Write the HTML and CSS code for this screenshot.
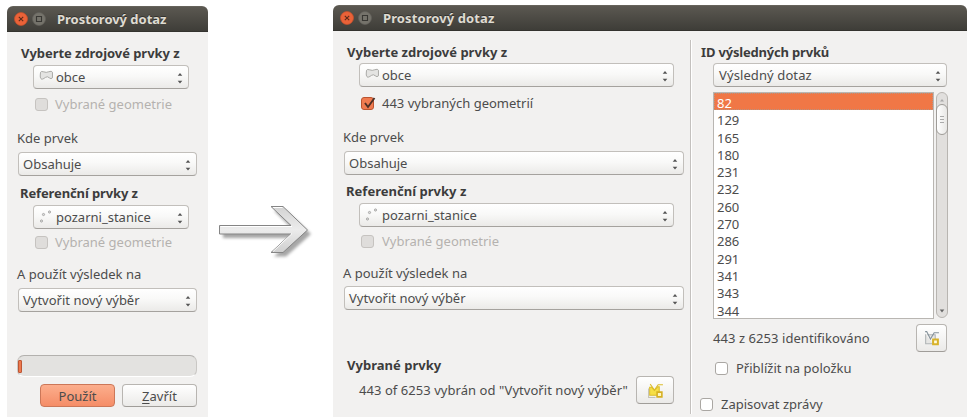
FILE: index.html
```
<!DOCTYPE html>
<html lang="cs">
<head>
<meta charset="utf-8">
<title>Prostorový dotaz</title>
<link rel="stylesheet" href="styles.css">
</head>
<body>
<svg width="0" height="0" class="defs">
  <defs>
    <linearGradient id="metal" x1="0" y1="0" x2="0" y2="1"><stop offset="0" stop-color="#d2d2d2"/><stop offset=".5" stop-color="#ececec"/><stop offset="1" stop-color="#cfcfcf"/></linearGradient>
    <symbol id="spin" viewBox="0 0 6 12"><path d="M.7 3.8 3 1l2.300 2.800zM.7 8.800 3 11.500l2.300-2.700z" fill="#555"/></symbol>
    <symbol id="poly" viewBox="0 0 16 12"><path d="M1.500 2.500Q2 1 5 2q3 1.200 5 0 4-1.500 4.500.5v6Q13 10.500 11 8.500 9 6.500 7 8q-4 3-5 1.500Q.8 8 1.200 5.500z" fill="#e4e4e2" stroke="#a3a3a0"/></symbol>
    <symbol id="dots" viewBox="0 0 16 16"><g fill="#ddd" stroke="#a2a2a0" stroke-width=".9"><circle cx="4.500" cy="5.500" r="1.100"/><circle cx="10.500" cy="3" r="1.100"/><circle cx="2.500" cy="12" r="1.100"/></g></symbol>
    <symbol id="close" viewBox="0 0 14 14"><circle cx="7" cy="7" r="6.500" fill="#ea6238" stroke="#c9502b" stroke-width=".7"/><path d="m4.800 4.800 4.400 4.400m0-4.400L4.800 9.200" stroke="#5c2b1b" stroke-width="1.100"/></symbol>
    <symbol id="max" viewBox="0 0 14 14"><circle cx="7" cy="7" r="6.500" fill="#75736b" stroke="#62605a" stroke-width=".7"/><path d="M4.500 4.500h5v5h-5z" fill="none" stroke="#383733" stroke-width="1.100"/></symbol>
  </defs>
</svg>
<div class="scene">
  <section class="win small">
    <header class="bar"><svg class="wb"><use href="#close"/></svg><svg class="wb"><use href="#max"/></svg><h1>Prostorový dotaz</h1></header>
    <div class="body">
      <h2>Vyberte zdrojové prvky z</h2>
      <div class="combo in"><svg class="poly"><use href="#poly"/></svg><span>obce</span><svg class="spin"><use href="#spin"/></svg></div>
      <label class="check off"><i></i>Vybrané geometrie</label>
      <p class="lbl">Kde prvek</p>
      <div class="combo"><span>Obsahuje</span><svg class="spin"><use href="#spin"/></svg></div>
      <h2 class="ref">Referenční prvky z</h2>
      <div class="combo in"><svg class="dots"><use href="#dots"/></svg><span>pozarni_stanice</span><svg class="spin"><use href="#spin"/></svg></div>
      <label class="check off second"><i></i>Vybrané geometrie</label>
      <p class="lbl res">A použít výsledek na</p>
      <div class="combo"><span>Vytvořit nový výběr</span><svg class="spin"><use href="#spin"/></svg></div>
      <div class="progress"><b></b></div>
      <div class="buttons"><span class="btn primary">Použít</span><span class="btn"><u>Z</u>avřít</span></div>
    </div>
  </section>

  <svg class="arrow" viewBox="0 0 120 80">
    <path d="M10 35.500h70L61 16.500h12L98 40 73 62.500H61L80 44H10z" fill="#777" class="shade"/>
    <path d="M9.500 35.500H81L61 16.500h12L97.500 40 73 62.500H61L81 44H9.500z" fill="url(#metal)" stroke="#858585"/>
    <path d="M10.500 36.500H82M63 17.500h9.500M63 61.500 82 43.500" fill="none" stroke="#fff"/>
  </svg>

  <section class="win large">
    <header class="bar"><svg class="wb"><use href="#close"/></svg><svg class="wb"><use href="#max"/></svg><h1>Prostorový dotaz</h1></header>
    <div class="cols">
      <div class="body">
        <h2>Vyberte zdrojové prvky z</h2>
        <div class="combo in"><svg class="poly"><use href="#poly"/></svg><span>obce</span><svg class="spin"><use href="#spin"/></svg></div>
        <label class="check"><i class="on"><svg viewBox="0 0 15 15"><path d="m4 7 3 4 6.500-9" fill="none" stroke="#4e3026" stroke-width="1.900"/></svg></i>443 vybraných geometrií</label>
        <p class="lbl">Kde prvek</p>
        <div class="combo"><span>Obsahuje</span><svg class="spin"><use href="#spin"/></svg></div>
        <h2 class="ref">Referenční prvky z</h2>
        <div class="combo in lower"><svg class="dots"><use href="#dots"/></svg><span>pozarni_stanice</span><svg class="spin"><use href="#spin"/></svg></div>
        <label class="check off second"><i></i>Vybrané geometrie</label>
        <p class="lbl res">A použít výsledek na</p>
        <div class="combo"><span>Vytvořit nový výběr</span><svg class="spin"><use href="#spin"/></svg></div>
        <h2 class="sel">Vybrané prvky</h2>
        <div class="selrow"><span>443 of 6253 vybrán od "Vytvořit nový výběr"</span>
          <span class="btn tool"><svg viewBox="0 0 16 16"><path d="M2.500 5h2L7 8l3-3.500h1.500V12.500h-9z" fill="#f6df45" stroke="#dcbd2c"/><path d="m3 2 4 5.500L10.500 2.500H15" fill="none" stroke="#dcbd2c"/><path d="M1.500 6v8.500H8" fill="none" stroke="#c4c2b4"/><path d="M9.500 9.500h4.500V14H9.500z" fill="#fff6c0" stroke="#d6b022" stroke-width="1.500"/></svg></span></div>
      </div>
      <div class="side">
        <h2>ID výsledných prvků</h2>
        <div class="combo"><span>Výsledný dotaz</span><svg class="spin"><use href="#spin"/></svg></div>
        <div class="listrow">
          <ul><li class="cur">82</li><li>129</li><li>165</li><li>180</li><li>231</li><li>232</li><li>260</li><li>270</li><li>286</li><li>291</li><li>341</li><li>343</li><li>344</li></ul>
          <div class="scroll"><svg viewBox="0 0 6 4"><path d="m1 3.500 2-2.500 2 2.500z" fill="#aaa"/></svg><div class="thumb"><i></i><i></i><i></i></div><svg class="dn" viewBox="0 0 6 4"><path d="m.7.5 2.300 3 2.300-3z" fill="#666"/></svg></div>
        </div>
        <div class="found"><span>443 z 6253 identifikováno</span>
          <span class="btn tool"><svg viewBox="0 0 16 16"><path d="M2.500 4v9H9M4 4.500h7.500V9" fill="#e6e6e4" stroke="#b0b4b6"/><path d="M2 1.500h1.500L7 8.500l3.500-6H15" fill="none" stroke="#84919a"/><path d="M9.500 9h4.500v4.500H9.500z" fill="#fffbe0" stroke="#d8b22a" stroke-width="1.900"/></svg></span></div>
        <label class="check zoomto"><i></i>Přiblížit na položku</label>
        <label class="check log"><i></i>Zapisovat zprávy</label>
      </div>
    </div>
  </section>
</div>
</body>
</html>
```
FILE: styles.css
```
*{box-sizing:border-box}
body{margin:0;background:#fff;color:#4c4c4c;font:13px/20px "Noto Sans",sans-serif;overflow:hidden}
h1,h2,p,ul{margin:0;padding:0;font-size:13px;line-height:20px;white-space:nowrap}
svg{flex:none;display:block}
.defs{position:absolute}
.scene{display:flex;align-items:flex-start;width:968px;height:417px;padding-left:7px}
.win{background:#f2f1f0;border-radius:6px 6px 0 0;overflow:hidden}
.small{width:201px;height:411px;margin-top:6px}
.large{width:634px;height:412px;margin-top:5px}
.bar{display:flex;align-items:center;height:26px;padding-left:7px;gap:4px;background:linear-gradient(#5b5851,#3e3d38);border-bottom:1px solid #34332f;border-top:1px solid #66635b}
.wb{width:14px;height:14px}
.bar h1{color:#dfdbd2;margin-left:7px;letter-spacing:-.03px;text-shadow:0 -1px #33322e}
.large .bar h1{letter-spacing:.1px}
.body{display:flex;flex-direction:column;padding:11px 11px 0 10px}
h2{color:#3c3c3c;padding-left:4px;letter-spacing:-.05px}
h2.ref{margin-top:7px;padding-left:3px;letter-spacing:-.12px}
.cols .body h2{letter-spacing:.02px}
.combo{display:flex;align-items:center;height:24px;flex:none;border:1px solid #c2bfbb;border-bottom-color:#a5a29e;border-radius:4px;background:linear-gradient(#fff,#f9f9f8 45%,#ebeae8);padding:0 5px 0 4px;margin-left:1px;white-space:nowrap}
.combo.in{margin:2px 8px 0 16px;padding-left:5px}
.combo .spin{width:6px;height:12px;margin-left:auto;transform:translateY(1px)}
.poly{width:15px;height:11px;margin:-3px 2px 0 0}
.dots{width:16px;height:16px;margin-right:1px}
.check{display:flex;align-items:center;height:20px;margin:5px 0 0 18px;gap:7px;white-space:nowrap}
.check i{width:13px;height:13px;flex:none;border:1px solid #aaa7a3;border-radius:3px;background:#fff}
.check.off{color:#b5b2af}
.check.off i{background:#dfdddb;border-color:#c6c3c0}
.check i.on{background:#f07b50;border-color:#bb5430}
.on svg{width:15px;height:15px;margin:-2px 0 0 -1px;overflow:visible}
.check.second{margin-top:3px}
.lbl{margin-top:14px}
.lbl.res{margin-top:12px}
.lbl + .combo{margin-top:4px}
.progress{height:22px;margin:43px 0 0 0;border:1px solid #c9c7c4;border-top-color:#b3b1ae;border-radius:7px;background:#e3e2e0;border-bottom-color:#fff;padding-top:4px}
.progress b{display:block;width:4px;height:13px;background:#ee794e;border:1px solid #bd5735;border-radius:1px}
.buttons{display:flex;justify-content:flex-end;gap:7px;margin-top:7px}
.btn{display:flex;align-items:center;justify-content:center;width:75px;height:23px;border:1px solid #b8b5b1;border-bottom-color:#a09d99;border-radius:4px;background:linear-gradient(#fff,#ebeae8)}
.primary{background:linear-gradient(#fcae8d,#f58d67);border-color:#cc7758}
.btn u{text-underline-offset:2px}
.arrow{width:120px;height:80px;margin:190px 3px 0 2px}
.shade{opacity:.65;filter:blur(1.500px);transform:translate(3px,4px)}
.cols{display:flex}
.cols .body{width:357px;padding:11px 6px 0 10px;flex:none}
.cols .combo.in{margin:1px 10px 0 16px}
.cols .combo.lower{margin-top:2px}
.cols .lbl{margin-top:14px}
.cols .lbl.res{margin-top:12px}
.cols .res + .combo{margin-top:3px}
.cols .ref{margin-top:6px}
.cols .check{gap:8px;margin-top:6px}
.cols .check.second{margin-top:4px}
.sel{margin-top:45px}
.selrow{display:flex;align-items:center;justify-content:space-between;margin:1px 10px 0 16px;height:28px;white-space:nowrap;letter-spacing:.05px}
.btn.tool{width:38px;height:28px}
.tool svg{width:17px;height:17px}
.side{display:flex;flex-direction:column;flex:1;border-left:1px solid #c4c1be;margin:9px 0 2px;padding:2px 20px 0 10px;height:374px;box-shadow:inset 1px 0 #fff}
.side h2{padding-left:0;letter-spacing:-.18px}
.side .combo{margin:1px 0 0 12px;padding-left:5px;letter-spacing:.1px}
.listrow{display:flex;justify-content:space-between;margin:5px -1px 0 12px;height:227px}
.side ul{width:221px;height:227px;list-style:none;background:#fff;border:1px solid #b9b6b2}
.side li{height:17.300px;line-height:20px;padding-left:3px}
.side .cur{background:#f07746;color:#fff;outline:1px dotted #b89382;outline-offset:-1px}
.scroll{display:flex;flex-direction:column;align-items:center;width:12px;height:226px;border:1px solid #b8b5b1;border-radius:6px;background:#e1dfdd;padding:5px 0 4px}
.scroll svg{width:6px;height:4px}
.thumb{width:12px;height:31px;border:1px solid #9f9c98;border-radius:6px;background:linear-gradient(90deg,#fff,#e8e7e5);margin-top:2px;display:flex;flex-direction:column;gap:2px;align-items:center;justify-content:center}
.thumb i{width:4px;height:1px;background:#aaa}
.scroll .dn{margin-top:auto}
.found{display:flex;align-items:center;justify-content:space-between;height:28px;margin:5px 0 0 12px;white-space:nowrap;letter-spacing:.06px}
.found .tool{width:31px}
.cols .check.zoomto{margin:6px 0 0 14px}
.cols .check.log{margin:16px 0 0 -1px}
```
